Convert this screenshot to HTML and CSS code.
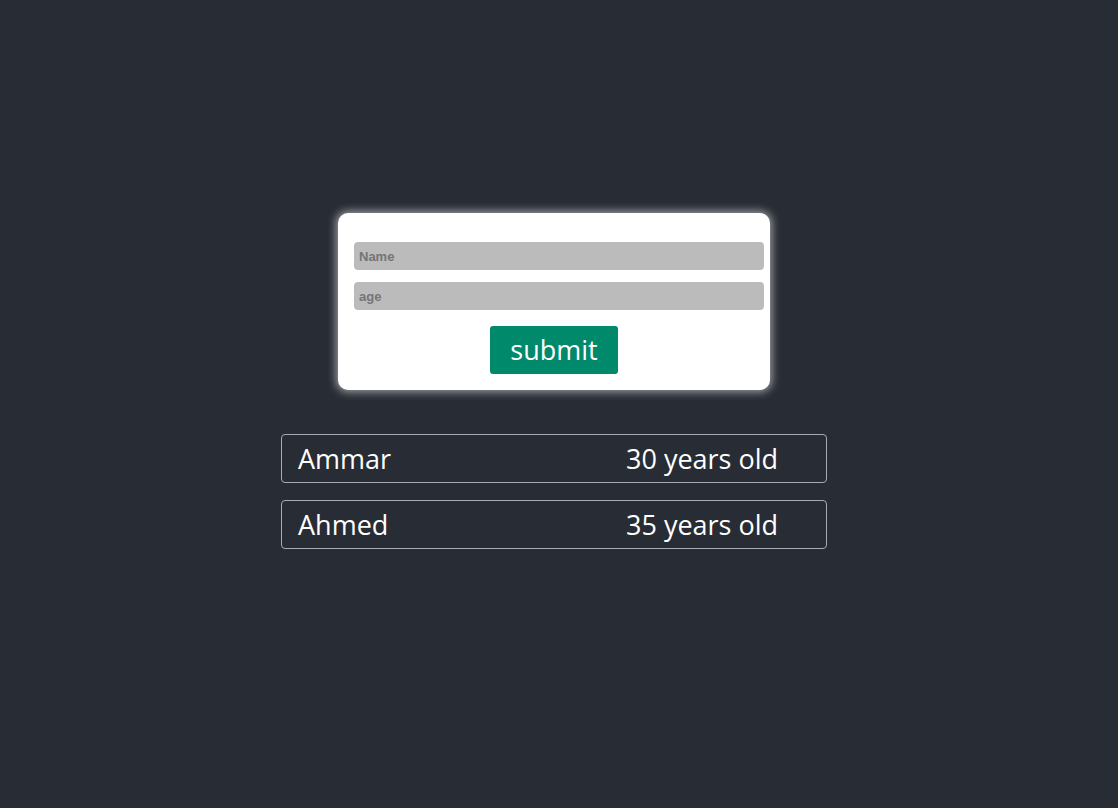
FILE: index.html
```html
<!DOCTYPE html>
<html>
<head>
<meta charset="utf-8">
<link rel="stylesheet" href="styles.css">
</head>
<body>
<div class="app">
  <form class="card">
    <input class="field" type="text" placeholder="Name">
    <input class="field" type="text" placeholder="age">
    <button class="submit" type="button">submit</button>
  </form>
  <ul class="list">
    <li class="item"><span class="name">Ammar</span><span class="age">30 years old</span></li>
    <li class="item"><span class="name">Ahmed</span><span class="age">35 years old</span></li>
  </ul>
</div>
</body>
</html>
```
FILE: styles.css
```css
html, body {
  margin: 0;
  padding: 0;
  background: #282c34;
  height: 100%;
}
.app {
  box-sizing: border-box;
  min-height: 808px;
  padding: 213px 10px 0 0;
  display: flex;
  flex-direction: column;
  align-items: center;
  font-family: "Open Sans", "Noto Sans", sans-serif;
}
.card {
  width: 400px;
  padding: 29px 16px 16px 16px;
  background: #fff;
  border-radius: 10px;
  box-shadow: 0 0 8px 2px rgba(255,255,255,0.55);
  display: flex;
  flex-direction: column;
  align-items: center;
  gap: 12px;
  margin: 0;
}
.field {
  align-self: flex-start;
  box-sizing: content-box;
  width: 400px;
  padding: 0 5px;
  height: 28px;
  border: none;
  border-radius: 4px;
  background: #bbbbbb;
  font-family: "Liberation Sans", Arial, sans-serif;
  font-weight: bold;
  font-size: 13px;
  outline: none;
}
.field::placeholder {
  color: #757575;
}
.submit {
  margin-top: 4px;
  width: 128px;
  height: 48px;
  border: none;
  border-radius: 3px;
  background: #00896b;
  color: #fff;
  font-family: "Open Sans", "Noto Sans", sans-serif;
  font-size: 27px;
  padding: 0;
  line-height: 48px;
}
.list {
  list-style: none;
  margin: 44px 0 0 0;
  padding: 0;
  display: flex;
  flex-direction: column;
  gap: 17px;
}
.item {
  box-sizing: border-box;
  width: 546px;
  height: 49px;
  border: 1px solid #a9abaf;
  border-radius: 4px;
  display: flex;
  align-items: center;
  padding-left: 16px;
  color: #fff;
  font-size: 27px;
}
.name {
  width: 328px;
}
```
